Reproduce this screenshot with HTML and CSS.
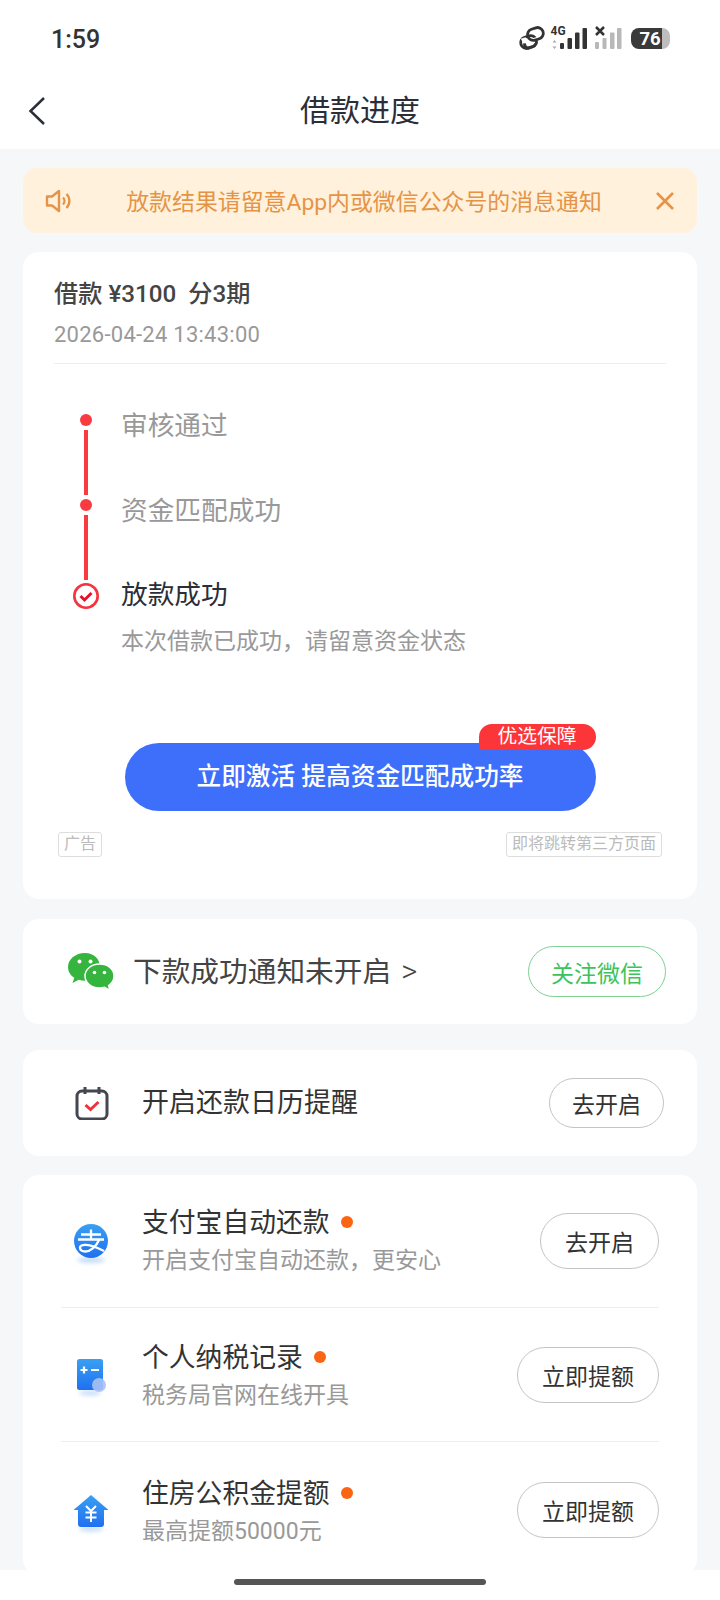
FILE: index.html
```html
<!DOCTYPE html>
<html lang="zh-CN">
<head>
  <meta charset="UTF-8">
  <meta name="viewport" content="width=device-width, initial-scale=1.0">
  <title>借款进度</title>
  <link rel="stylesheet" href="styles.css">
</head>
<body>
  <div class="page">
    <header class="top">
      <div class="status-bar">
        <span class="clock">1:59</span>
        <svg class="status-icons" width="160" height="30" viewBox="510 24 160 30">
          <g fill="none" stroke-width="2.800" transform="rotate(-18 532 38)">
            <rect x="519.500" y="35" width="16" height="11.500" rx="5.700" stroke="#333"/>
            <path d="M531 29.500h7.300a5.700 5.700 0 0 1 0 11.500h-9a5.700 5.700 0 0 1-5.700-5.700" stroke="#fff" stroke-width="5"/>
            <rect x="528.500" y="29.500" width="16" height="11.500" rx="5.700" stroke="#333"/>
            <path d="M523 40.700a5.700 5.700 0 0 0 2.200 5.800h4.800a5.700 5.700 0 0 0 5.500-5.700" stroke="#333"/>
          </g>
          <text x="550.5" y="35" class="net">4G</text>
          <path d="M554.5 40l-2 2.500h4zM554.500 49l-2-2.500h4z" fill="#aaa"/>
          <g fill="#333">
            <rect x="560" y="43" width="4" height="6" rx="1"/>
            <rect x="567.500" y="38" width="4.500" height="11" rx="1"/>
            <rect x="575" y="32.500" width="4.500" height="16.500" rx="1"/>
            <rect x="582.500" y="28" width="4.500" height="21" rx="1"/>
          </g>
          <path d="M596 27l8 8M604 27l-8 8" stroke="#333" stroke-width="2.500" fill="none"/>
          <g fill="#b8b8b8">
            <rect x="595" y="42" width="4" height="7" rx="1"/>
            <rect x="602.500" y="38" width="4" height="11" rx="1"/>
            <rect x="610" y="32.500" width="4.500" height="16.500" rx="1"/>
            <rect x="617" y="28" width="4.500" height="21" rx="1"/>
          </g>
          <path d="M655 28h7a8 8 0 0 1 8 8v5a8 8 0 0 1-8 8h-7z" fill="#bdbdbd"/>
          <path d="M639 28h23v21h-23a8 8 0 0 1-8-8v-5a8 8 0 0 1 8-8z" fill="#3a3a3a"/>
          <text x="639.500" y="45" class="batt">76</text>
        </svg>
      </div>
      <div class="nav">
        <svg class="back" width="20" height="30" viewBox="0 0 20 30">
          <path d="M17 2L3.500 15 17 28" fill="none" stroke="#2b2e38" stroke-width="2.500"/>
        </svg>
        <h1>借款进度</h1>
      </div>
    </header>

    <main class="content">
      <div class="notice">
        <svg class="notice-icon" width="28" height="26" viewBox="0 0 28 26">
          <path d="M2 8.500h5L14 3v20l-7-5.500H2z" fill="none" stroke="#e59447" stroke-width="2.400" stroke-linejoin="round"/>
          <path d="M18 9.500a5 5 0 0 1 0 7M21.500 6a10 10 0 0 1 0 14" fill="none" stroke="#e59447" stroke-width="2.400"/>
        </svg>
        <span class="notice-text">放款结果请留意App内或微信公众号的消息通知</span>
        <svg class="notice-close" width="20" height="20" viewBox="0 0 20 20">
          <path d="M2 2l16 16M18 2L2 18" stroke="#e59447" stroke-width="2.600" fill="none"/>
        </svg>
      </div>

      <section class="card loan">
        <div class="loan-head">
          <div class="loan-title">借款 ¥3100&nbsp; 分3期</div>
          <div class="loan-date">2026-04-24 13:43:00</div>
        </div>

        <div class="timeline">
          <div class="step">
            <div class="marker"><i class="dot"></i><i class="line"></i></div>
            <div class="step-text">审核通过</div>
          </div>
          <div class="step second">
            <div class="marker"><i class="dot"></i><i class="line"></i></div>
            <div class="step-text">资金匹配成功</div>
          </div>
          <div class="step last">
            <div class="marker">
              <svg width="28" height="28" viewBox="0 0 28 28">
                <circle cx="14" cy="14" r="11.700" fill="none" stroke="#f5333f" stroke-width="2.600"/>
                <path d="M8.500 14l4 4 7-7" fill="none" stroke="#e8112d" stroke-width="3"/>
              </svg>
            </div>
            <div>
              <div class="step-text current">放款成功</div>
              <div class="step-sub">本次借款已成功，请留意资金状态</div>
            </div>
          </div>
        </div>

        <div class="cta-wrap">
          <button class="cta">立即激活 提高资金匹配成功率</button>
          <span class="cta-tag">优选保障</span>
        </div>

        <div class="ad-row">
          <span class="ad-tag">广告</span>
          <span class="ad-tag">即将跳转第三方页面</span>
        </div>
      </section>

      <section class="card wechat">
        <svg class="wechat-icon" width="48" height="40" viewBox="0 0 48 40">
          <path d="M18 1C8.500 1 1 7.300 1 15c0 4.400 2.400 8.200 6.300 10.800L5.500 31l6.200-3.200c2 .6 4.100.9 6.300.9 9.500 0 15-6.300 15-13.700S27.500 1 18 1z" fill="#35b53e"/>
          <path d="M32.500 12C24.500 12 18 17.300 18 24s6.500 12 14.500 12c1.800 0 3.500-.3 5-.8l5.500 3.300-1.400-5c3.400-2.300 5.400-5.700 5.400-9.500 0-6.700-6-12-14.500-12z" fill="#35b53e" stroke="#fff" stroke-width="1.500"/>
          <circle cx="12.500" cy="9.500" r="2" fill="#fff"/>
          <circle cx="23.500" cy="9.500" r="2" fill="#fff"/>
          <circle cx="27.500" cy="20.500" r="1.800" fill="#fff"/>
          <circle cx="37.500" cy="20.500" r="1.800" fill="#fff"/>
        </svg>
        <span class="wechat-text">下款成功通知未开启<span class="wechat-arrow">&gt;</span></span>
        <button class="pill green">关注微信</button>
      </section>

      <section class="card calendar">
        <svg class="calendar-icon" width="34" height="34" viewBox="0 0 34 34">
          <rect x="2" y="5" width="30" height="28" rx="5" fill="none" stroke="#444750" stroke-width="3"/>
          <path d="M10 1v7M24 1v7" stroke="#444750" stroke-width="3" fill="none"/>
          <path d="M10.500 19l5 4.500 8-7.500" fill="none" stroke="#f0303d" stroke-width="3"/>
        </svg>
        <span class="row-title">开启还款日历提醒</span>
        <button class="pill short">去开启</button>
      </section>

      <section class="card list">
        <div class="item">
          <svg class="item-icon" width="40" height="44" viewBox="0 0 40 44">
            <defs>
              <linearGradient id="blue-a" x1="0" y1="0" x2="0" y2="1">
                <stop offset="0" stop-color="#3aa0f2"/>
                <stop offset="1" stop-color="#1f70f0"/>
              </linearGradient>
            </defs>
            <ellipse class="glow" cx="20" cy="37" rx="14" ry="3" fill="#c4dcfa"/>
            <circle cx="20" cy="18" r="17" fill="url(#blue-a)"/>
            <path d="M10 11.500h20M20 6.500v10M7 16.500h26M28 17c-3 7-9 11.500-13.500 11.500-3.500 0-5.500-1.600-5.500-4C9 21 17 20 33 28" fill="none" stroke="#fff" stroke-width="2.300"/>
          </svg>
          <div class="item-body">
            <div class="row-title">支付宝自动还款<i class="badge"></i></div>
            <div class="item-sub">开启支付宝自动还款，更安心</div>
          </div>
          <button class="pill">去开启</button>
        </div>
        <div class="item">
          <svg class="item-icon" width="40" height="44" viewBox="0 0 40 44">
            <ellipse class="glow" cx="19" cy="37" rx="11" ry="2.500" fill="#c4dcfa"/>
            <rect x="6" y="3" width="26" height="31" rx="2.500" fill="url(#blue-a)"/>
            <path d="M9.500 14h7M13 10.500v7M20 14h8" stroke="#fff" stroke-width="2.200" fill="none"/>
            <circle class="soft" cx="28" cy="29" r="7" fill="#a9c2f5"/>
          </svg>
          <div class="item-body">
            <div class="row-title">个人纳税记录<i class="badge"></i></div>
            <div class="item-sub">税务局官网在线开具</div>
          </div>
          <button class="pill">立即提额</button>
        </div>
        <div class="item">
          <svg class="item-icon" width="40" height="44" viewBox="0 0 40 44">
            <ellipse class="glow" cx="20" cy="37" rx="12" ry="2.500" fill="#c4dcfa"/>
            <path d="M20 3L2.500 18H7v14a3 3 0 0 0 3 3h20a3 3 0 0 0 3-3V18h4.500z" fill="url(#blue-a)"/>
            <path d="M15 14l5 5 5-5M14.500 20.500h11M14.500 25.500h11M20 19v11" fill="none" stroke="#fff" stroke-width="2"/>
          </svg>
          <div class="item-body">
            <div class="row-title">住房公积金提额<i class="badge"></i></div>
            <div class="item-sub">最高提额50000元</div>
          </div>
          <button class="pill">立即提额</button>
        </div>
      </section>
    </main>

    <div class="home-bar"><i></i></div>
  </div>
</body>
</html>
```

FILE: styles.css
```css
* {
  box-sizing: border-box;
}
html, body {
  margin: 0;
  padding: 0;
}
body {
  font-family: Roboto, "Noto Sans CJK SC", sans-serif;
  background-color: #f6f7f9;
  color: #2b2e38;
}
.page {
  width: 720px;
  height: 1600px;
  overflow: hidden;
  display: flex;
  flex-direction: column;
}
.top {
  height: 149px;
  background-color: #fff;
}
.status-bar {
  height: 78px;
  padding: 0 50px 0 51px;
  display: flex;
  align-items: center;
  justify-content: space-between;
}
.clock {
  font-size: 25px;
  font-weight: 500;
  color: #333;
}
.status-icons text {
  font-weight: 700;
}
.status-icons .net {
  font-size: 12px;
  fill: #333;
}
.status-icons .batt {
  font-size: 18.500px;
  fill: #fff;
}
.nav {
  height: 69px;
  padding-bottom: 3px;
  display: flex;
  align-items: center;
  justify-content: center;
  position: relative;
}
.nav h1 {
  margin: 0;
  font-size: 30px;
  font-weight: 400;
  line-height: 40px;
}
.back {
  position: absolute;
  left: 27px;
  top: 18px;
}
.content {
  flex: 1;
  padding: 19px 23px 0;
  display: flex;
  flex-direction: column;
}
.notice {
  height: 65px;
  margin-bottom: 19px;
  padding: 0 22px;
  background-color: #fff1db;
  border-radius: 14px;
  display: flex;
  align-items: center;
}
.notice-icon {
  flex-shrink: 0;
}
.notice-text {
  flex: 1;
  text-align: center;
  font-size: 22.900px;
  color: #e59447;
  white-space: nowrap;
  padding-bottom: 2px;
}
.card {
  background-color: #fff;
  border-radius: 16px;
}
.loan {
  height: 647px;
  padding: 0 31px;
  margin-bottom: 20px;
}
.loan-head {
  height: 112px;
  padding-top: 24px;
  border-bottom: 1px solid #eeeeee;
}
.loan-title {
  font-size: 24.200px;
  font-weight: 500;
  line-height: 36px;
  color: #444;
}
.loan-date {
  margin-top: 8px;
  font-size: 22px;
  line-height: 30px;
  letter-spacing: 0.25px;
  color: #999;
}
.timeline {
  margin-top: 50px;
  padding-left: 18px;
}
.step {
  display: flex;
  height: 85px;
}
.step.second {
  height: 80px;
}
.step.last {
  height: auto;
}
.marker {
  width: 28px;
  margin-right: 21px;
  display: flex;
  flex-direction: column;
  align-items: center;
  flex-shrink: 0;
}
.step.last .marker {
  padding-top: 3px;
}
.dot {
  width: 12px;
  height: 12px;
  border-radius: 50%;
  background-color: #f93a40;
  flex-shrink: 0;
}
.line {
  width: 4px;
  height: 65px;
  flex-shrink: 0;
  margin-top: 4px;
  background-color: #f93a40;
}
.step-text {
  font-size: 26.700px;
  line-height: 36px;
  color: #999;
  margin-top: -6px;
}
.step.last .step-text {
  margin-top: -2px;
}
.step-text.current {
  color: #2b2e38;
}
.step-sub {
  margin-top: 12px;
  font-size: 23px;
  line-height: 34px;
  color: #999;
}
.cta-wrap {
  position: relative;
  width: 471px;
  margin: 84px auto 0;
}
.cta {
  display: block;
  width: 100%;
  height: 68px;
  padding: 0 0 7px;
  border: 0;
  border-radius: 34px;
  background-color: #3d6ffb;
  color: #fff;
  font-family: inherit;
  font-size: 24.700px;
  font-weight: 500;
}
.cta-tag {
  position: absolute;
  right: 0;
  top: -19px;
  width: 117px;
  height: 26px;
  background-color: #fb3538;
  border-radius: 13px 13px 13px 0;
  color: #fff;
  font-size: 19.800px;
  line-height: 26px;
  text-align: center;
}
.ad-row {
  margin: 21px 4px 0;
  display: flex;
  justify-content: space-between;
}
.ad-tag {
  height: 25px;
  padding: 0 5px;
  border: 1px solid #dddddd;
  border-radius: 3px;
  font-size: 16px;
  line-height: 22px;
  color: #bbb;
}
.wechat {
  height: 105px;
  margin-bottom: 26px;
  padding: 0 31px 0 44px;
  display: flex;
  align-items: center;
}
.wechat-text {
  flex: 1;
  margin-left: 18px;
  padding-bottom: 4px;
  font-size: 28.700px;
  color: #444;
  white-space: nowrap;
}
.wechat-arrow {
  margin-left: 10px;
  font-weight: 300;
  font-size: 31px;
}
.calendar {
  height: 106px;
  margin-bottom: 19px;
  padding: 0 33px 0 52px;
  display: flex;
  align-items: center;
}
.calendar .row-title {
  flex: 1;
  margin-left: 33px;
  font-size: 27px;
}
.row-title {
  font-size: 26.800px;
  line-height: 36px;
  color: #333;
  white-space: nowrap;
}
.pill {
  height: 56px;
  padding: 0 24px;
  background-color: #fff;
  border: 1px solid #c4c4c4;
  border-radius: 28px;
  color: #333;
  font-family: inherit;
  font-size: 23px;
  flex-shrink: 0;
}
.pill.short {
  height: 50px;
  width: 115px;
  padding: 0;
}
.pill.green {
  width: 138px;
  height: 51px;
  padding: 0;
  border-color: #7fd093;
  color: #3cc35c;
}
.list {
  height: 400px;
  padding: 0 38px;
}
.item {
  height: 134px;
  display: flex;
  align-items: center;
  border-bottom: 1px solid #eeeeee;
}
.item:first-child {
  height: 133px;
}
.item:last-child {
  height: 136px;
  border-bottom: 0;
}
.item-icon {
  flex-shrink: 0;
  margin: 7px 0 0 10px;
}
.glow {
  filter: blur(2px);
}
.soft {
  opacity: 0.9;
}
.item-body {
  flex: 1;
  margin-left: 31px;
  padding-top: 4px;
}
.item:first-child .item-body {
  padding-top: 1px;
}
.item-sub {
  font-size: 23px;
  line-height: 34px;
  color: #999;
  margin-top: 3px;
}
.badge {
  display: inline-block;
  width: 12px;
  height: 12px;
  margin-left: 11px;
  border-radius: 50%;
  background-color: #fb6412;
  vertical-align: 4px;
}
.home-bar {
  position: absolute;
  left: 0;
  top: 1570px;
  width: 720px;
  height: 30px;
  background-color: #fff;
  display: flex;
  justify-content: center;
  padding-top: 9px;
}
.home-bar i {
  width: 252px;
  height: 6px;
  border-radius: 3px;
  background-color: #555;
}
```
